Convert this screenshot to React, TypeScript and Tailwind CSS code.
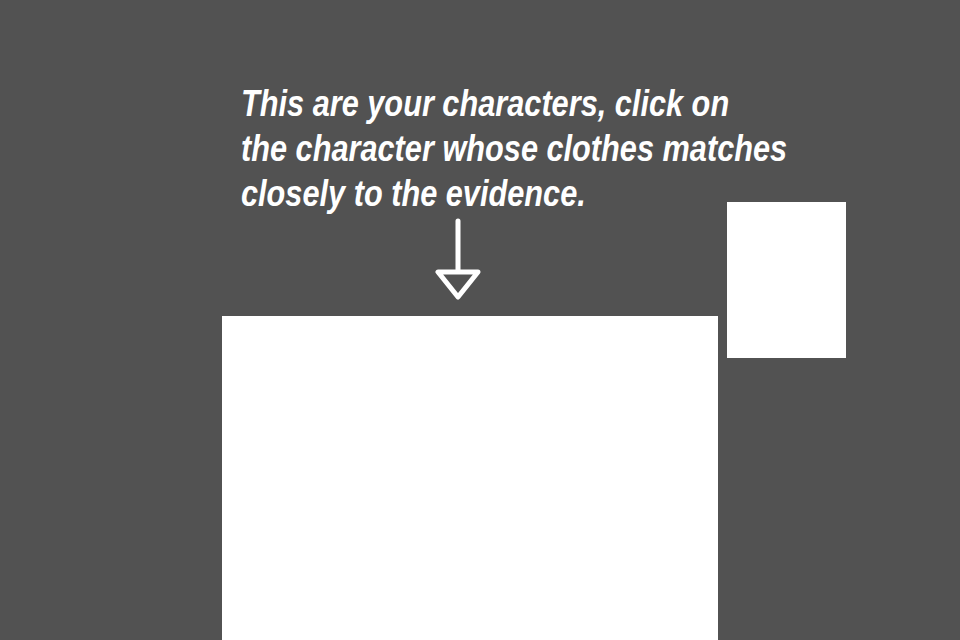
export default function App() {
  return (
    <div className="flex h-[640px] w-[960px] flex-col overflow-hidden bg-[#525252]">
      <div className="h-[202px] shrink-0 pl-[241px] pt-[81px]">
        <p
          className="origin-left scale-x-[0.853] whitespace-nowrap text-[36px] font-bold italic leading-[45px] text-white"
          style={{ fontFamily: '"Liberation Sans", Arial, sans-serif' }}
        >
          This are your characters, click on
          <br />
          the character whose clothes matches
          <br />
          closely to the evidence.
        </p>
      </div>
      <div className="flex">
        <div className="ml-[222px] flex w-[496px] flex-col">
          <div className="flex h-[114px] pl-[212px] pt-[16px]">
            <svg width="48" height="84" viewBox="0 0 48 84" fill="none">
              <path
                d="M24 3 V54 M4 54 H44 L24 79 Z"
                stroke="white"
                strokeWidth="5"
                strokeLinecap="round"
                strokeLinejoin="round"
              />
            </svg>
          </div>
          <div className="h-[324px] bg-white" />
        </div>
        <div className="ml-[9px] h-[156px] w-[119px] bg-white" />
      </div>
    </div>
  );
}
